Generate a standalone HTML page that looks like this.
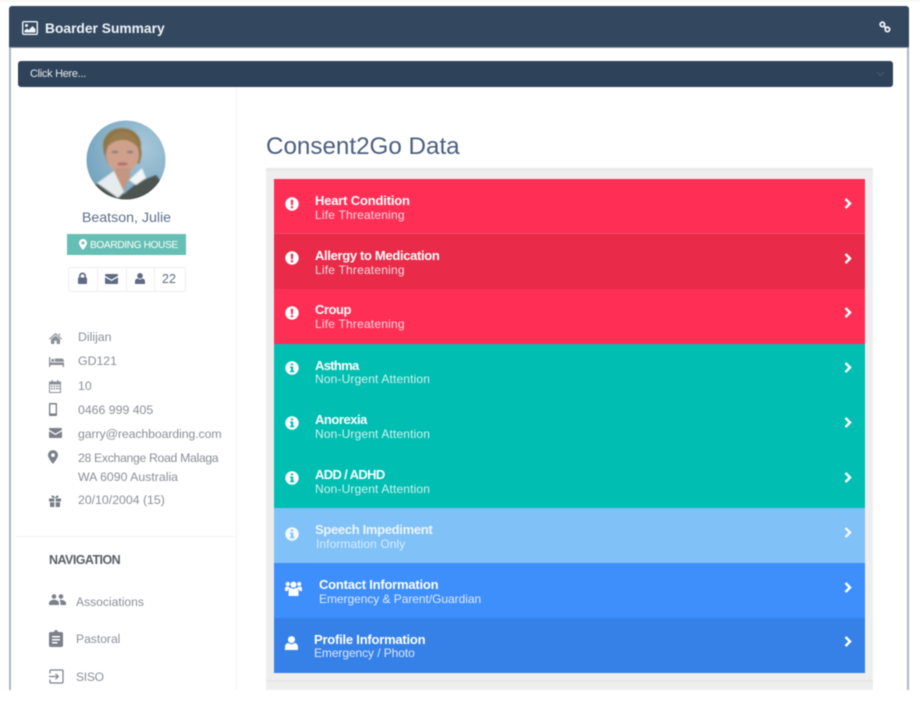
<!DOCTYPE html>
<html>
<head>
<meta charset="utf-8">
<style>
html,body{margin:0;padding:0;width:920px;height:706px;overflow:hidden;background:#fff}
body{font-family:"Liberation Sans",sans-serif;position:relative}
#w{position:absolute;left:0;top:0;width:920px;height:706px;filter:blur(.4px)}
.a{position:absolute;white-space:nowrap}
svg{position:absolute;overflow:visible}
.s{font-size:12.3px;color:#8b8f98;line-height:16px;left:78px}
.n{font-size:12.1px;color:#8b8f98;line-height:16px;left:76px}
.r{position:absolute;left:274px;width:591px}
.t{position:absolute;font-size:13px;font-weight:bold;color:#fff;line-height:16px;white-space:nowrap}
.u{position:absolute;font-size:12px;color:#fff;opacity:.82;line-height:14px;white-space:nowrap}
.c{position:absolute;border:1px solid #eee;background:#fff;height:23px;top:267px;box-sizing:content-box}
</style>
</head>
<body>
<div id="w">
<div class="a" style="left:0;top:0;width:920px;height:2px;background:#f8f8f8"></div>

<!-- panel -->
<div class="a" style="left:9px;top:6px;width:900px;height:684px;box-sizing:border-box;border-left:2px solid #a9b6c5;border-right:2px solid #a9b6c5;border-radius:3px 3px 0 0;background:#fff"></div>
<div class="a" style="left:9px;top:6px;width:900px;height:42px;background:#33475f;border-radius:3px 3px 0 0;border-bottom:1px solid #8c99a8;box-sizing:border-box"></div>
<svg style="left:22px;top:21px" width="16" height="14" viewBox="0 0 16 14"><rect x=".7" y=".7" width="14.6" height="12.6" rx="1.2" fill="none" stroke="#f0f4f8" stroke-width="1.4"/><circle cx="4.5" cy="4.5" r="1.5" fill="#f0f4f8"/><path d="M2.5 11.5V9.5L5 7.5 6.800 9 10.500 5 13.500 8.200V11.500Z" fill="#f0f4f8"/></svg>
<div class="a" style="left:45px;top:20px;font-size:13.8px;font-weight:bold;color:#eef2f6;line-height:18px">Boarder Summary</div>
<svg style="left:879px;top:21px" width="12" height="12" viewBox="0 0 12 12"><g fill="none" stroke="#f0f4f8" stroke-width="1.800"><circle cx="3.400" cy="3.400" r="2.200"/><circle cx="8.400" cy="8.400" r="2.200"/><path d="M4.800 4.800 7 7"/></g></svg>

<!-- dropdown -->
<div class="a" style="left:18px;top:60.5px;width:874.5px;height:26.5px;background:#2e4259;border-radius:3px"></div>
<div class="a" style="left:30px;top:66px;font-size:11px;color:#e6eaee;line-height:16px;letter-spacing:-.3px">Click Here...</div>
<svg style="left:876px;top:71px" width="9" height="6" viewBox="0 0 9 6"><path d="M1 1 4.500 4.500 8 1" fill="none" stroke="#45566b" stroke-width="1.300"/></svg>

<!-- sidebar divider -->
<div class="a" style="left:236px;top:87px;width:1px;height:603px;background:#f3f3f3"></div>
<div class="a" style="left:16px;top:536px;width:220px;height:1px;background:#f2f2f2"></div>

<!-- photo -->
<svg style="left:86px;top:120px" width="80" height="80" viewBox="0 0 80 80">
<defs>
<clipPath id="pc"><circle cx="40" cy="40" r="39.500"/></clipPath>
<radialGradient id="bg" cx=".7" cy=".35" r=".85"><stop offset="0" stop-color="#a8c8da"/><stop offset="1" stop-color="#6d9fba"/></radialGradient>
<filter id="b1"><feGaussianBlur stdDeviation=".7"/></filter>
</defs>
<g clip-path="url(#pc)">
<rect width="80" height="80" fill="url(#bg)"/>
<g filter="url(#b1)">
<ellipse cx="36" cy="25" rx="19" ry="17" fill="#8f7649"/>
<path d="M17 30C20 38 20 41 22 44L28 42 26 26Z" fill="#8f7649"/>
<path d="M55 28C56 34 55 40 53 44L47 42 48 26Z" fill="#8f7649"/>
<ellipse cx="36.500" cy="35" rx="16.500" ry="18" fill="#cfa18d"/>
<path d="M19 30C22 18 29 12 37 12 45 12 52 18 54 30 48 22 42 20 37 20 30 20 24 23 19 30Z" fill="#997c4e"/>
<path d="M29 48H44L44 58 37 71 29 58Z" fill="#c39682"/>
<ellipse cx="29" cy="32" rx="3.500" ry="1.400" fill="#8d7d78"/>
<ellipse cx="44" cy="32" rx="3.500" ry="1.400" fill="#8d7d78"/>
<ellipse cx="36.500" cy="44" rx="5.500" ry="1.800" fill="#b76f6c"/>
<path d="M0 82 3 68 24 57 38 74 52 62 70 55 80 68V82Z" fill="#4d5553"/>
<path d="M11 63 28 51 38 72 32 78Z" fill="#e6ecee"/>
<path d="M43 60 56 48 60 58 50 65Z" fill="#f3f6f6"/>
<path d="M30 54 44 54 38 71Z" fill="#c39682"/>
</g>
</g>
</svg>

<div class="a" style="left:0;width:253px;text-align:center;top:209px;font-size:14.2px;color:#5f6f8c;line-height:18px">Beatson, Julie</div>

<!-- badge -->
<div class="a" style="left:67px;top:234px;width:119px;height:21px;background:#66bfb4"></div>
<svg style="left:79px;top:239px" width="8" height="11" viewBox="0 0 8 11"><path fill-rule="evenodd" d="M4 0C1.800 0 0 1.800 0 4 0 6.500 4 11 4 11S8 6.500 8 4C8 1.800 6.200 0 4 0ZM4 2.500A1.500 1.500 0 1 1 4 5.500 1.500 1.500 0 0 1 4 2.500Z" fill="#fff"/></svg>
<div class="a" style="left:90px;top:238px;font-size:10.2px;color:#fff;line-height:15px;letter-spacing:-.4px">BOARDING HOUSE</div>

<!-- button group -->
<div class="c" style="left:68px;width:28px;border-radius:2px 0 0 2px"></div>
<div class="c" style="left:97px;width:28px"></div>
<div class="c" style="left:126px;width:27px"></div>
<div class="c" style="left:154px;width:30px;border-radius:0 2px 2px 0"></div>
<svg style="left:78px;top:273px" width="9" height="11" viewBox="0 0 9 11"><path fill-rule="evenodd" d="M1 4.500V3A3.500 3.500 0 0 1 8 3V4.500C8.600 4.500 9 4.900 9 5.500V10C9 10.600 8.600 11 8 11H1C.4 11 0 10.600 0 10V5.500C0 4.900.4 4.500 1 4.500ZM2.700 4.500H6.300V3A1.800 1.800 0 0 0 2.700 3Z" fill="#5f6b85"/></svg>
<svg style="left:105px;top:274px" width="13" height="10" viewBox="0 0 13 10"><path d="M1 0H12C12.600 0 13 .4 13 1V1.800L6.500 5.600 0 1.800V1C0 .4.4 0 1 0Z M0 3.200 6.500 7 13 3.200V9C13 9.600 12.600 10 12 10H1C.4 10 0 9.600 0 9Z" fill="#5f6b85"/></svg>
<svg style="left:135px;top:273px" width="10" height="11" viewBox="0 0 10 11"><circle cx="5" cy="2.800" r="2.800" fill="#5f6b85"/><path d="M0 11V8.500C0 6.500 1.500 5.500 2.800 5.500 3.500 6.200 4.200 6.400 5 6.400 5.800 6.400 6.500 6.200 7.200 5.500 8.500 5.500 10 6.500 10 8.500V11Z" fill="#5f6b85"/></svg>
<div class="a" style="left:153px;width:32px;text-align:center;top:271px;font-size:12.5px;color:#5f6b85;line-height:16px">22</div>

<!-- details -->
<svg style="left:49px;top:333px" width="13" height="11" viewBox="0 0 13 11"><path d="M6.500 0 13 5.800 12.200 6.500 6.500 1.600.8 6.500 0 5.800Z M2 6.300 6.500 2.600 11 6.300V11H7.700V7.800H5.300V11H2Z M9.500 .8H11V3L9.500 1.800Z" fill="#8b8f98"/></svg>
<div class="a s" style="top:329px">Dilijan</div>

<svg style="left:49px;top:357px" width="15" height="10" viewBox="0 0 15 10"><path d="M0 0H1.300V5.500H15V10H13.700V8H1.300V10H0Z M2.300 2H5V4.700H2.300Z M5.800 1.500H12.500C14 1.500 15 2.500 15 4.700H5.800Z" fill="#8b8f98"/></svg>
<div class="a s" style="top:353px">GD121</div>

<svg style="left:49px;top:380px" width="12" height="13" viewBox="0 0 12 13"><path fill-rule="evenodd" d="M2.500 0H3.800V1.500H8.200V0H9.500V1.500H12V13H0V1.500H2.500ZM1 4.500V12H11V4.500ZM2 5.500H3.500V7H2ZM4.500 5.500H6V7H4.500ZM7 5.500H8.500V7H7ZM9.200 5.500H10.500V7H9.200ZM2 8H3.500V9.500H2ZM4.500 8H6V9.500H4.500ZM7 8H8.500V9.500H7ZM9.200 8H10.500V9.500H9.200Z" fill="#8b8f98"/></svg>
<div class="a s" style="top:378px">10</div>

<svg style="left:49px;top:403px" width="8" height="13" viewBox="0 0 8 13"><path fill-rule="evenodd" d="M1 0H7C7.600 0 8 .4 8 1V12C8 12.600 7.600 13 7 13H1C.4 13 0 12.600 0 12V1C0 .4.4 0 1 0ZM1.300 1.500V10.500H6.700V1.500Z" fill="#777c86"/></svg>
<div class="a s" style="top:402px">0466 999 405</div>

<svg style="left:49px;top:428px" width="13" height="10" viewBox="0 0 13 10"><path d="M1 0H12C12.600 0 13 .4 13 1V1.800L6.500 5.600 0 1.800V1C0 .4.4 0 1 0Z M0 3.200 6.500 7 13 3.200V9C13 9.600 12.600 10 12 10H1C.4 10 0 9.600 0 9Z" fill="#7b808a"/></svg>
<div class="a s" style="top:426px;letter-spacing:-.1px">garry@reachboarding.com</div>

<svg style="left:48px;top:450px" width="10" height="14" viewBox="0 0 8 11"><path fill-rule="evenodd" d="M4 0C1.800 0 0 1.800 0 4 0 6.500 4 11 4 11S8 6.500 8 4C8 1.800 6.200 0 4 0ZM4 2.500A1.500 1.500 0 1 1 4 5.500 1.500 1.500 0 0 1 4 2.500Z" fill="#7b808a"/></svg>
<div class="a s" style="top:450px;letter-spacing:-.35px">28 Exchange Road Malaga</div>
<div class="a s" style="top:469px">WA 6090 Australia</div>

<svg style="left:49px;top:495px" width="12" height="12" viewBox="0 0 12 12"><path d="M0 3.500H5.300V6.500H0Z M6.700 3.500H12V6.500H6.700Z M1 7.200H5.300V12H1Z M6.700 7.200H11V12H6.700Z M3 .5C4.300.2 5.500 1.300 6 3 6.500 1.300 7.700.2 9 .5 10 1 9.500 2.800 7.500 3H4.500C2.500 2.800 2 1 3 .5Z" fill="#777c86"/></svg>
<div class="a s" style="top:492px">20/10/2004 (15)</div>

<!-- navigation -->
<div class="a" style="left:49px;top:552px;font-size:12.500px;font-weight:bold;color:#5b5e66;line-height:16px;letter-spacing:-.55px">NAVIGATION</div>

<svg style="left:49px;top:594px" width="17" height="11" viewBox="0 0 17 11"><circle cx="5" cy="2.500" r="2.300" fill="#7b808a"/><circle cx="12" cy="2.500" r="2.300" fill="#7b808a"/><path d="M0 11V9C0 7 3 5.800 5 5.800 7 5.800 10 7 10 9V11Z M11 5.900C13.500 5.600 17 7 17 9V11H11.500V9C11.500 7.800 11.200 6.800 10.300 6Z" fill="#7b808a"/></svg>
<div class="a n" style="top:594px">Associations</div>

<svg style="left:49px;top:630px" width="14" height="17" viewBox="0 0 14 17"><path fill-rule="evenodd" d="M1.500 2H5C5.200 .8 6 0 7 0S8.800.8 9 2H12.500C13.300 2 14 2.700 14 3.500V15.500C14 16.300 13.300 17 12.500 17H1.500C.7 17 0 16.300 0 15.500V3.500C0 2.700.7 2 1.500 2ZM3 6V7.500H11V6ZM3 9V10.500H11V9ZM3 12V13.500H8.500V12Z" fill="#7b808a"/></svg>
<div class="a n" style="top:631px">Pastoral</div>

<svg style="left:49px;top:669px" width="15" height="15" viewBox="0 0 15 15"><path d="M1 4.500V2C1 1.400 1.400 1 2 1H13C13.600 1 14 1.400 14 2V13C14 13.600 13.600 14 13 14H2C1.400 14 1 13.600 1 13V10.500" fill="none" stroke="#7b808a" stroke-width="1.200"/><path d="M0 7.500H9M6.500 4.800 9.300 7.500 6.500 10.200" fill="none" stroke="#7b808a" stroke-width="1.200"/></svg>
<div class="a n" style="top:669px;letter-spacing:-.3px">SISO</div>

<!-- title -->
<div class="a" style="left:266px;top:132px;font-size:24.2px;color:#4a5f7e;line-height:30px">Consent2Go Data</div>

<!-- grey box -->
<div class="a" style="left:266px;top:168px;width:607px;height:522px;background:#eeeeee"></div>
<div class="a" style="left:266px;top:168px;width:607px;height:3px;background:#e9e9e9"></div>
<div class="a" style="left:266px;top:680px;width:607px;height:2px;background:#e6e6e6"></div>

<!-- rows -->
<div class="r" style="top:179px;height:55px;background:#ff2e55;border-bottom:1px solid #f24a68;box-sizing:border-box"></div>
<div class="r" style="top:234px;height:55px;background:#e92a49"></div>
<div class="r" style="top:289px;height:55px;background:#ff2e55"></div>
<div class="r" style="top:344px;height:164px;background:#00beb1"></div>
<div class="r" style="top:508px;height:55px;background:#80c1f7"></div>
<div class="r" style="top:563px;height:55px;background:#3e8efc"></div>
<div class="r" style="top:618px;height:55px;background:#3681e8"></div>

<!-- row text -->
<div class="t" style="left:315px;top:193px;letter-spacing:-.18px">Heart Condition</div><div class="u" style="left:315px;top:208px;letter-spacing:.2px">Life Threatening</div>
<div class="t" style="left:315px;top:248px;letter-spacing:-.33px">Allergy to Medication</div><div class="u" style="left:315px;top:263px;letter-spacing:.2px">Life Threatening</div>
<div class="t" style="left:315px;top:302px;letter-spacing:-.45px">Croup</div><div class="u" style="left:315px;top:317px;letter-spacing:.2px">Life Threatening</div>
<div class="t" style="left:315px;top:358px;letter-spacing:-.68px">Asthma</div><div class="u" style="left:315px;top:372px;letter-spacing:.15px">Non-Urgent Attention</div>
<div class="t" style="left:315px;top:412px;letter-spacing:-.47px">Anorexia</div><div class="u" style="left:315px;top:427px;letter-spacing:.15px">Non-Urgent Attention</div>
<div class="t" style="left:315px;top:467px;letter-spacing:-.65px">ADD / ADHD</div><div class="u" style="left:315px;top:482px;letter-spacing:.15px">Non-Urgent Attention</div>
<div class="t" style="left:315px;top:522px;opacity:.85;letter-spacing:-.32px">Speech Impediment</div><div class="u" style="left:316px;top:537px;opacity:.7;letter-spacing:.08px">Information Only</div>
<div class="t" style="left:319px;top:577px;letter-spacing:-.22px">Contact Information</div><div class="u" style="left:319px;top:592px;letter-spacing:-.05px">Emergency &amp; Parent/Guardian</div>
<div class="t" style="left:314px;top:632px;letter-spacing:-.22px">Profile Information</div><div class="u" style="left:314px;top:646px;letter-spacing:-.08px">Emergency / Photo</div>

<!-- row icons -->
<svg style="left:285px;top:197px" width="14" height="14" viewBox="0 0 14 14"><circle cx="7" cy="7" r="6.700" fill="#fff"/><path d="M5.800 2.800H8.200L7.900 8.200H6.100ZM5.900 9.300H8.100V11.200H5.900Z" fill="#ff2e55"/></svg>
<svg style="left:285px;top:251px" width="14" height="14" viewBox="0 0 14 14"><circle cx="7" cy="7" r="6.700" fill="#fff"/><path d="M5.800 2.800H8.200L7.900 8.200H6.100ZM5.900 9.300H8.100V11.200H5.900Z" fill="#e92a49"/></svg>
<svg style="left:285px;top:306px" width="14" height="14" viewBox="0 0 14 14"><circle cx="7" cy="7" r="6.700" fill="#fff"/><path d="M5.800 2.800H8.200L7.900 8.200H6.100ZM5.900 9.300H8.100V11.200H5.900Z" fill="#ff2e55"/></svg>
<svg style="left:285px;top:361px" width="14" height="14" viewBox="0 0 14 14"><circle cx="7" cy="7" r="6.700" fill="#fff"/><path d="M5.900 2.500H8.100V4.300H5.900ZM5 5.500H8.200V9.800H9.200V11.200H5V9.800H6V6.900H5Z" fill="#00beb1"/></svg>
<svg style="left:285px;top:416px" width="14" height="14" viewBox="0 0 14 14"><circle cx="7" cy="7" r="6.700" fill="#fff"/><path d="M5.900 2.500H8.100V4.300H5.900ZM5 5.500H8.200V9.800H9.200V11.200H5V9.800H6V6.900H5Z" fill="#00beb1"/></svg>
<svg style="left:285px;top:471px" width="14" height="14" viewBox="0 0 14 14"><circle cx="7" cy="7" r="6.700" fill="#fff"/><path d="M5.900 2.500H8.100V4.300H5.900ZM5 5.500H8.200V9.800H9.200V11.200H5V9.800H6V6.900H5Z" fill="#00beb1"/></svg>
<svg style="left:285px;top:527px" width="14" height="14" viewBox="0 0 14 14"><circle cx="7" cy="7" r="6.700" fill="#fff" opacity=".9"/><path d="M5.900 2.500H8.100V4.300H5.900ZM5 5.500H8.200V9.800H9.200V11.200H5V9.800H6V6.900H5Z" fill="#80c1f7"/></svg>
<svg style="left:285px;top:581px" width="17" height="15" viewBox="0 0 17 15"><g fill="#fff"><circle cx="8.500" cy="3.600" r="3"/><circle cx="2.800" cy="3" r="2.100"/><circle cx="14.200" cy="3" r="2.100"/><path d="M3.500 15V10.500C3.500 8 5 6.800 6.300 6.800 7 7.500 7.800 7.800 8.500 7.800 9.200 7.800 10 7.500 10.700 6.800 12 6.800 13.500 8 13.500 10.500V15Z"/><path d="M0 10V7.500C0 6.300 1 5.500 2 5.500 2.500 5.900 3.200 6 4.200 5.900 4.300 6.600 4.600 7 5 7.400 3.500 8 2.800 9 2.500 10Z"/><path d="M17 10V7.500C17 6.300 16 5.500 15 5.500 14.500 5.900 13.800 6 12.800 5.900 12.700 6.600 12.400 7 12 7.400 13.500 8 14.200 9 14.500 10Z"/></g></svg>
<svg style="left:285px;top:636px" width="13" height="14" viewBox="0 0 13 14"><circle cx="6.500" cy="3.600" r="3.500" fill="#fff"/><path d="M0 14V11C0 8.500 1.800 7 3.500 7 4.400 7.900 5.400 8.200 6.500 8.200 7.600 8.200 8.600 7.900 9.500 7 11.200 7 13 8.500 13 11V14Z" fill="#fff"/></svg>

<!-- chevrons -->
<svg style="left:840px;top:190px" width="20" height="480" viewBox="0 0 20 480"><g fill="none" stroke="#fff" stroke-width="2.500"><path d="M5.500 9 10 13.500 5.500 18"/><path d="M5.500 64 10 68.500 5.500 73"/><path d="M5.500 118 10 122.500 5.500 127"/><path d="M5.500 173 10 177.500 5.500 182"/><path d="M5.500 228 10 232.500 5.500 237"/><path d="M5.500 283 10 287.500 5.500 292"/><path d="M5.500 338 10 342.500 5.500 347" opacity=".9"/><path d="M5.500 393 10 397.500 5.500 402"/><path d="M5.500 447 10 451.500 5.500 456"/></g></svg>
</div>
</body>
</html>
